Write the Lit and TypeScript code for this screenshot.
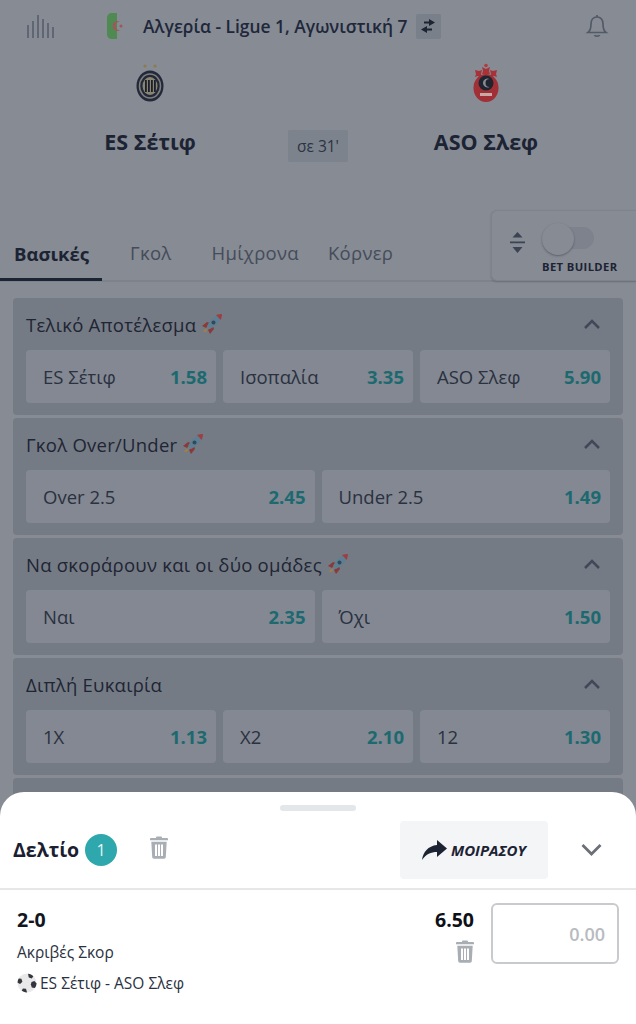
import { LitElement, html, css, svg } from 'lit';
import { customElement } from 'lit/decorators.js';

type Market = { title: string; rocket?: boolean; odds: [string, string][] };

const markets: Market[] = [
  { title: 'Τελικό Αποτέλεσμα', rocket: true, odds: [['ES Σέτιφ', '1.58'], ['Ισοπαλία', '3.35'], ['ASO Σλεφ', '5.90']] },
  { title: 'Γκολ Over/Under', rocket: true, odds: [['Over 2.5', '2.45'], ['Under 2.5', '1.49']] },
  { title: 'Να σκοράρουν και οι δύο ομάδες', rocket: true, odds: [['Ναι', '2.35'], ['Όχι', '1.50']] },
  { title: 'Διπλή Ευκαιρία', odds: [['1X', '1.13'], ['X2', '2.10'], ['12', '1.30']] },
  { title: 'Draw No Bet', odds: [] },
];

const tabs = ['Βασικές', 'Γκολ', 'Ημίχρονα', 'Κόρνερ'];

const trash = html`<svg width="18" height="24" viewBox="0 0 18 24" fill="currentColor">
  <path d="M6.5 1.5h5l.6 1.6H17c.6 0 1 .5 1 1v1.2H0V4.100c0-.5.400-1 1-1h4.900z" />
  <path d="M1.300 6.800h15.400l-.9 15.300c-.1 1-.8 1.700-1.700 1.700H3.900c-.9 0-1.600-.7-1.700-1.700zM5 9.500v11.500h2V9.500zm3 0v11.500h2V9.500zm3 0v11.500h2V9.500z" fill-rule="evenodd" />
</svg>`;

const rocket = html`<svg class="rocket" width="22" height="22" viewBox="0 0 22 22">
  <path d="M1 13l5-4 3 1-4 5z" fill="#8a3a3a" />
  <path d="M9 21l4-5-1-3-5 4z" fill="#8a3a3a" />
  <path d="M2 19c1-2 2-3 3-3l1 1c0 1-1 2-4 2z" fill="#a8803c" />
  <path d="M6 13C9 7 14 2 21 1c-1 7-6 12-12 15z" fill="#5d7f92" />
  <path d="M15 2c2-.6 4-1 6-1-.2 2-.5 4-1.200 6z" fill="#a03c42" />
  <circle cx="12.500" cy="9.500" r="2" fill="#2f4a5e" />
</svg>`;

@customElement('app-root')
export class AppRoot extends LitElement {
  static styles = css`
    :host {
      display: block;
      position: relative;
      height: 1024px;
      overflow: hidden;
      background: #868b94;
      font-family: 'Open Sans', 'Noto Sans', sans-serif;
      color: #1c2333;
    }

    .topbar {
      display: flex;
      align-items: center;
      height: 52px;
      padding: 0 27px;
    }
    .league {
      display: flex;
      align-items: center;
      margin-left: 53px;
      flex: 1;
    }
    .league-name {
      margin-left: 18px;
      font-size: 17.4px;
      font-weight: 600;
      white-space: nowrap;
      color: #20273a;
    }
    .swap {
      display: flex;
      align-items: center;
      justify-content: center;
      width: 25px;
      height: 25px;
      margin-left: 8px;
      background: #79808a;
      border-radius: 2px;
    }
    .bell {
      margin-right: 0;
      display: block;
    }

    .teams {
      display: grid;
      grid-template-columns: 1fr 60px 1fr;
      padding: 0 12px;
      margin-top: 11px;
      height: 100px;
    }
    .team {
      display: flex;
      flex-direction: column;
      align-items: center;
    }
    .team-name {
      margin-top: 23px;
      font-size: 21.5px;
      font-weight: 700;
      line-height: 32px;
      color: #1c2333;
    }
    .kickoff {
      align-self: start;
      margin-top: 67px;
      height: 32px;
      line-height: 32px;
      text-align: center;
      font-size: 15.5px;
      color: #2c3444;
      background: #7c838d;
      border-radius: 2px;
      white-space: nowrap;
    }

    .tabs {
      display: flex;
      align-items: flex-end;
      height: 74px;
      margin-top: 38px;
      position: relative;
      border-bottom: 2px solid #7d828b;
      margin-top: 47px;
      height: 70px;
      box-sizing: content-box;
    }
    .tab {
      height: 61px;
      line-height: 67px;
      font-size: 18.500px;
      letter-spacing: 0.3px;
      color: #454c5a;
      white-space: nowrap;
      box-sizing: border-box;
    }
    .tab.active {
      font-weight: 700;
      color: #1c2333;
      letter-spacing: 0;
      border-bottom: 3px solid #1c2333;
      margin-bottom: -1px;
      padding: 0 13px 0 14px;
    }
    .tab:nth-child(2) { margin-left: 28px; }
    .tab:nth-child(3) { margin-left: 40px; }
    .tab:nth-child(4) { margin-left: 29px; }

    .builder {
      position: absolute;
      right: 0;
      top: 0;
      bottom: -1px;
      width: 145px;
      box-sizing: border-box;
      border: 1px solid #7e838c;
      border-right: none;
      border-radius: 6px 0 0 6px;
      box-shadow: 0 1px 2px rgba(40, 46, 58, 0.25);
      background: #868b94;
    }
    .builder-inner {
      display: flex;
      height: 100%;
    }
    .expand {
      width: 50px;
      padding-top: 19px;
      padding-left: 17px;
      box-sizing: border-box;
    }
    .builder-side {
      display: flex;
      flex-direction: column;
      align-items: center;
      padding-top: 13px;
    }
    .toggle {
      position: relative;
      width: 52px;
      height: 25px;
      margin-left: 0;
      align-self: flex-start;
    }
    .toggle-track {
      position: absolute;
      left: 6px;
      top: 3px;
      width: 46px;
      height: 22px;
      border-radius: 11px;
      background: #7d828c;
    }
    .toggle-knob {
      position: absolute;
      left: 0;
      top: -1px;
      width: 32px;
      height: 32px;
      border-radius: 50%;
      background: #868b94;
      box-shadow: 0 1px 2px rgba(40, 46, 58, 0.45);
    }
    .builder-label {
      margin-top: 10px;
      font-size: 11.200px;
      font-weight: 700;
      letter-spacing: 0.4px;
      color: #1c2333;
      white-space: nowrap;
    }

    .markets {
      display: flex;
      flex-direction: column;
      gap: 3px;
      padding: 16px 13px 0;
    }
    .market {
      background: #757b84;
      border-radius: 4px;
      padding: 0 13px 12px;
      height: 117px;
      box-sizing: border-box;
    }
    .market-head {
      display: flex;
      align-items: center;
      height: 52px;
    }
    .market-title {
      font-size: 18.500px;
      letter-spacing: 0.25px;
      color: #1e2534;
      white-space: nowrap;
    }
    .rocket {
      margin-left: 5px;
    }
    .chevron {
      margin-left: auto;
      margin-right: 9px;
    }
    .odds {
      display: flex;
      gap: 7px;
    }
    .odd {
      flex: 1;
      display: flex;
      align-items: center;
      justify-content: space-between;
      height: 53px;
      padding: 0 9px 0 17px;
      background: #838892;
      border-radius: 4px;
      font-size: 18.500px;
      color: #2a3140;
    }
    .odd b {
      font-weight: 700;
      font-size: 18.500px;
      color: #1c6a70;
    }

    .sheet {
      position: absolute;
      left: 0;
      right: 0;
      bottom: 0;
      height: 232px;
      background: #fff;
      border-radius: 24px 24px 0 0;
    }
    .handle {
      width: 76px;
      height: 6px;
      margin: 13px auto 0;
      border-radius: 3px;
      background: #e3e7e9;
    }
    .sheet-head {
      display: flex;
      align-items: center;
      height: 77px;
      padding: 0 34px 0 13px;
      border-bottom: 2px solid #e6e7e9;
    }
    .slip-title {
      font-size: 19.500px;
      font-weight: 700;
      color: #1a2030;
    }
    .badge {
      display: flex;
      align-items: center;
      justify-content: center;
      width: 32px;
      height: 32px;
      margin-left: 6px;
      border-radius: 50%;
      background: #2ea8ac;
      color: #e4f4f4;
      font-size: 16px;
    }
    .slip-trash {
      margin-left: 33px;
      color: #a9adb4;
    }
    .share {
      display: flex;
      align-items: center;
      justify-content: center;
      gap: 4px;
      width: 148px;
      height: 58px;
      margin-left: auto;
      background: #f4f5f7;
      border-radius: 4px;
      font-size: 15px;
      font-weight: 700;
      font-style: italic;
      color: #1c2333;
    }
    .close {
      margin-left: 33px;
    }

    .bet {
      display: flex;
      padding: 14px 17px 0 17px;
    }
    .bet-info {
      flex: 1;
      min-width: 0;
    }
    .bet-pick {
      font-size: 19.500px;
      font-weight: 700;
      line-height: 32px;
      color: #12161f;
    }
    .bet-market {
      font-size: 15.500px;
      line-height: 32px;
      margin-top: 0;
      color: #2a3140;
    }
    .bet-match {
      display: flex;
      align-items: center;
      gap: 3px;
      font-size: 15.500px;
      line-height: 30px;
      margin-top: 0;
      color: #2a3140;
    }
    .bet-side {
      display: flex;
      flex-direction: column;
      align-items: flex-end;
      margin-right: 17px;
    }
    .bet-odd {
      font-size: 19.500px;
      font-weight: 700;
      line-height: 32px;
      color: #0d1017;
    }
    .bet-trash {
      color: #a9adb4;
      margin-top: 3px;
      margin-right: 0;
    }
    .stake {
      display: flex;
      align-items: center;
      justify-content: flex-end;
      width: 128px;
      height: 61px;
      box-sizing: border-box;
      margin-top: -1px;
      padding-right: 12px;
      border: 2px solid #c8cacd;
      border-radius: 6px;
      font-size: 18px;
      font-weight: 600;
      color: #b8bbc0;
    }
  `;

  renderFlag() {
    return html`<svg width="18" height="26" viewBox="0 0 18 26">
      <path d="M5 0h5v26H5c-3 0-5-2-5-5V5c0-3 2-5 5-5z" fill="#4f8a52" />
      <path d="M10 0h2c3 0 5 2 5 5v16c0 3-2 5-5 5h-2z" fill="#868b94" />
      <path d="M13 8.500a5 5 0 1 0 0 9 4 4 0 1 1 0-9z" fill="#a4545a" />
      <circle cx="14" cy="13" r="1.500" fill="#a4545a" />
    </svg>`;
  }

  renderHomeCrest() {
    return html`<svg width="34" height="40" viewBox="0 0 34 40">
      <circle cx="12" cy="3" r="1.600" fill="#8f7a4e" />
      <circle cx="22" cy="3" r="1.600" fill="#8f7a4e" />
      <ellipse cx="17" cy="23" rx="13.500" ry="15.500" fill="#23283a" />
      <ellipse cx="17" cy="23" rx="10.500" ry="12" fill="none" stroke="#7d7f7a" stroke-width="1.500" />
      <ellipse cx="17" cy="23" rx="7.500" ry="9" fill="#8a8570" />
      ${[12, 15, 18, 21].map(
        (x) => svg`<rect x=${x} y="17" width="1.800" height="12" fill="#1b1f2c" />`
      )}
    </svg>`;
  }

  renderAwayCrest() {
    return html`<svg width="34" height="40" viewBox="0 0 34 40">
      <circle cx="17" cy="2.500" r="1.800" fill="#b23a40" />
      <path d="M6 7l4 1 3-1-1 4 1 3-4-1-3 1 1-3z" fill="#a83238" />
      <path d="M28 7l-4 1-3-1 1 4-1 3 4-1 3 1-1-3z" fill="#a83238" />
      <path d="M13 4l4 2 4-2-1 4 1 3h-8l1-3z" fill="#a83238" />
      <ellipse cx="17" cy="25" rx="12.500" ry="14" fill="#a02f36" />
      <circle cx="17" cy="20" r="7.500" fill="#20242f" />
      <path d="M20.500 16a4.500 4.500 0 1 0 0 8 3.500 3.500 0 1 1 0-8z" fill="#868b94" />
      <rect x="11" y="30" width="12" height="3" fill="#c7a9a6" />
    </svg>`;
  }

  renderBall() {
    return html`<svg width="20" height="20" viewBox="0 0 20 20">
      <circle cx="10" cy="10" r="9.500" fill="#e9e9ea" />
      <path d="M10 6l3.500 2.500-1.300 4h-4.400L6.500 8.500z" fill="#e9e9ea" />
      <path d="M11 .7c2 .2 4 1.100 5.300 2.500l-1.500 2.400-3-1.100z" fill="#33363c" />
      <path d="M1.800 5.400l2.600.3 1 3-2.300 2.300-2.500-1.200c0-1.600.3-3 1.200-4.400z" fill="#33363c" />
      <path d="M14.500 9l3-1 2 2.600c-.1 1.700-.7 3.200-1.700 4.500l-3-.5-1-3z" fill="#33363c" />
      <path d="M6 15.500l3 .3 1 3.400-.5.300c-1.800-.1-3.500-.8-4.800-1.900z" fill="#33363c" />
    </svg>`;
  }

  renderMarket(m: Market) {
    return html`<section class="market">
      <div class="market-head">
        <span class="market-title">${m.title}</span>
        ${m.rocket ? rocket : ''}
        ${m.odds.length
          ? html`<svg class="chevron" width="18" height="12" viewBox="0 0 18 12" fill="none" stroke="#41485a" stroke-width="2.500">
              <path d="M2 10l7-7 7 7" />
            </svg>`
          : ''}
      </div>
      <div class="odds">
        ${m.odds.map(([label, value]) => html`<div class="odd"><span>${label}</span><b>${value}</b></div>`)}
      </div>
    </section>`;
  }

  render() {
    return html`
      <header class="topbar">
        <svg width="27" height="26" viewBox="0 0 27 26" stroke="#545b68" stroke-width="1.500">
          <path d="M1 12v13M6 8v17M11 2v23M16 6v19M21 10v15M26 14v11" />
        </svg>
        <div class="league">
          ${this.renderFlag()}
          <span class="league-name">Αλγερία - Ligue 1, Αγωνιστική 7</span>
          <span class="swap">
            <svg width="16" height="14" viewBox="0 0 16 14" fill="#1c2333">
              <path d="M9 0l6 3.500L9 7V4.500H4v-2h5zM7 7v2.500h5v2H7V14L1 10.500z" />
            </svg>
          </span>
        </div>
        <svg class="bell" width="24" height="24" viewBox="0 0 24 24" fill="none" stroke="#535a67" stroke-width="1.700">
          <path d="M12 3c-4 0-6 3-6 7 0 5-1 7-3 8.500h18c-2-1.500-3-3.500-3-8.500 0-4-2-7-6-7z" />
          <path d="M12 3V1M9.500 21c.5 1.500 4.500 1.500 5 0" />
        </svg>
      </header>

      <div class="teams">
        <div class="team">
          ${this.renderHomeCrest()}
          <div class="team-name">ES Σέτιφ</div>
        </div>
        <div class="kickoff">σε 31'</div>
        <div class="team">
          ${this.renderAwayCrest()}
          <div class="team-name">ASO Σλεφ</div>
        </div>
      </div>

      <nav class="tabs">
        ${tabs.map((t, i) => html`<div class="tab ${i === 0 ? 'active' : ''}">${t}</div>`)}
        <div class="builder">
          <div class="builder-inner">
            <div class="expand">
              <svg width="17" height="26" viewBox="0 0 17 26" fill="#3c4353">
                <path d="M8.500 2l5 5.500h-10zM1 11.500h15v1.800H1zM3.500 17h10l-5 6z" />
              </svg>
            </div>
            <div class="builder-side">
              <div class="toggle">
                <div class="toggle-track"></div>
                <div class="toggle-knob"></div>
              </div>
              <div class="builder-label">BET BUILDER</div>
            </div>
          </div>
        </div>
      </nav>

      <div class="markets">${markets.map((m) => this.renderMarket(m))}</div>

      <aside class="sheet">
        <div class="handle"></div>
        <div class="sheet-head">
          <span class="slip-title">Δελτίο</span>
          <span class="badge">1</span>
          <span class="slip-trash">${trash}</span>
          <div class="share">
            <svg width="25" height="20" viewBox="0 0 25 20" fill="#1c2333">
              <path d="M15 0l10 8.500L15 17v-5C9 12 4 14 0 20c1-8 6-14 15-15z" />
            </svg>
            <span>ΜΟΙΡΑΣΟΥ</span>
          </div>
          <svg class="close" width="21" height="13" viewBox="0 0 21 13" fill="none" stroke="#6a6f78" stroke-width="2.800">
            <path d="M1.500 2l9 9 9-9" />
          </svg>
        </div>
        <div class="bet">
          <div class="bet-info">
            <div class="bet-pick">2-0</div>
            <div class="bet-market">Ακριβές Σκορ</div>
            <div class="bet-match">${this.renderBall()}<span>ES Σέτιφ - ASO Σλεφ</span></div>
          </div>
          <div class="bet-side">
            <div class="bet-odd">6.50</div>
            <span class="bet-trash">${trash}</span>
          </div>
          <div class="stake">0.00</div>
        </div>
      </aside>
    `;
  }
}

declare global {
  interface HTMLElementTagNameMap {
    'app-root': AppRoot;
  }
}
